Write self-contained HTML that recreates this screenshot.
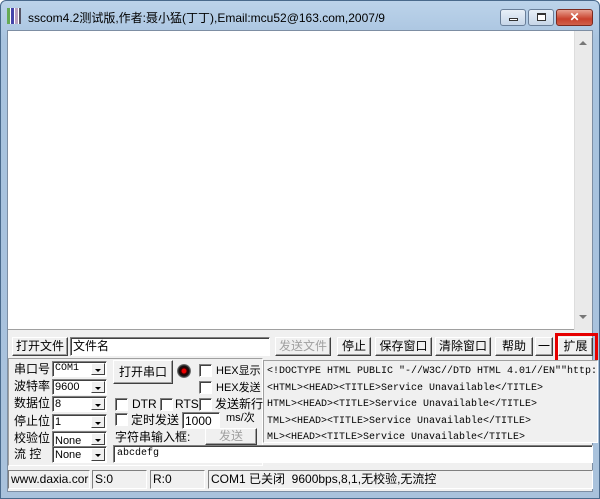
<!DOCTYPE html>
<html><head><meta charset="utf-8"><style>
*{box-sizing:border-box;margin:0;padding:0}
body{width:600px;height:499px;overflow:hidden;background:#fff;font-family:"Liberation Sans","Noto Sans CJK SC",sans-serif;font-size:12px;color:#000}
.win{position:absolute;left:0;top:0;width:600px;height:499px;background:linear-gradient(#bcd3ea,#a8c3df 40px,#a9c2dc);border:1px solid #4a6a8c;border-radius:6px 6px 0 0}
.a{position:absolute;white-space:nowrap}
.client{position:absolute;left:7px;top:30px;width:586px;height:462px;background:#f0f0f0;border:1px solid #7d8ea3}
.btn{position:absolute;background:#f0f0f0;border:1px solid;border-color:#fff #404040 #404040 #fff;box-shadow:inset -1px -1px #a0a0a0;text-align:center;font-size:12px;line-height:17px;white-space:nowrap}
.sunk{position:absolute;background:#fff;border:1px solid;border-color:#808080 #fff #fff #808080;box-shadow:inset 1px 1px #404040;white-space:nowrap}
.combo{position:absolute;background:#fff;border:1px solid;border-color:#808080 #fff #fff #808080;box-shadow:inset 1px 1px #404040;font-size:11px;padding-left:2px;line-height:14px}
.combo i{position:absolute;right:1px;top:1px;width:14px;bottom:1px;background:#f0f0f0;border:1px solid;border-color:#fff #404040 #404040 #fff}
.combo i:after{content:"";position:absolute;left:3px;top:5px;border-left:3px solid transparent;border-right:3px solid transparent;border-top:3px solid #000}
.chk{position:absolute;width:13px;height:13px;background:#fff;border:1px solid;border-color:#808080 #fff #fff #808080;box-shadow:inset 1px 1px #404040}
.lab{position:absolute;font-size:12px;line-height:16px;white-space:nowrap}
.mono{font-family:"Liberation Mono","Noto Sans CJK SC",monospace;font-size:10px}
.st{position:absolute;top:470px;height:19px;border:1px solid;border-color:#808080 #fff #fff #808080;font-size:12px;line-height:17px;padding-left:2px;white-space:nowrap;overflow:hidden}
</style></head><body>
<div class="win">
 <div class="a" style="left:6px;top:7px;width:14px;height:16px;background:linear-gradient(90deg,#6a5 0 3px,#fff 3px 4px,#44a 4px 7px,#fff 7px 8px,#b8a0c0 8px 11px,#fff 11px 12px,#556 12px)"></div>
 <div class="a" style="left:27px;top:8px;font-size:12px;color:#000">sscom4.2测试版,作者:聂小猛(丁丁),Email:mcu52@163.com,2007/9</div>
 <div class="a" style="left:499px;top:8px;width:26px;height:17px;border:1px solid #6a7f99;border-radius:3px;background:linear-gradient(#e8f0f8,#c6d6e8)"><div style="position:absolute;left:8px;top:8px;width:9px;height:3px;border:1px solid #333;background:#fff"></div></div>
 <div class="a" style="left:527px;top:8px;width:26px;height:17px;border:1px solid #6a7f99;border-radius:3px;background:linear-gradient(#e8f0f8,#c6d6e8)"><div style="position:absolute;left:8px;top:3px;width:9px;height:8px;border:1px solid #333;border-top-width:2px;background:#fff"></div></div>
 <div class="a" style="left:555px;top:8px;width:37px;height:17px;border:1px solid #7a2a20;border-radius:3px;background:linear-gradient(#e8a090,#c8412c 60%,#d0604a);color:#fff;font-weight:bold;text-align:center;line-height:15px;font-size:12px">✕</div>
</div>
<div class="client">
 <div class="a" style="left:0;top:0;width:584px;height:299px;background:#fff;border-bottom:1px solid #a0a0a0"></div>
 <div class="a" style="left:566px;top:0;width:18px;height:299px;background:#eaeaea;border-left:1px solid #ddd"></div>
 <div class="a" style="left:571px;top:10px;border-left:4px solid transparent;border-right:4px solid transparent;border-bottom:4px solid #777"></div>
 <div class="a" style="left:571px;top:284px;border-left:4px solid transparent;border-right:4px solid transparent;border-top:4px solid #777"></div>
</div>
<div class="btn" style="left:12px;top:337px;width:56px;height:19px">打开文件</div>
<div class="sunk" style="left:70px;top:337px;width:200px;height:19px;font-size:12px;line-height:17px;padding-left:2px">文件名</div>
<div class="btn" style="left:275px;top:337px;width:56px;height:19px;color:#a0a0a0">发送文件</div>
<div class="btn" style="left:337px;top:337px;width:34px;height:19px">停止</div>
<div class="btn" style="left:375px;top:337px;width:57px;height:19px">保存窗口</div>
<div class="btn" style="left:435px;top:337px;width:56px;height:19px">清除窗口</div>
<div class="btn" style="left:495px;top:337px;width:38px;height:19px">帮助</div>
<div class="btn" style="left:535px;top:337px;width:18px;height:19px">一</div>
<div class="btn" style="left:558px;top:337px;width:35px;height:19px">扩展</div>
<div class="a" style="left:555px;top:333px;width:43px;height:30px;border:3px solid #e60000"></div>
<div class="a" style="left:8px;top:358px;width:255px;height:108px;border:1px solid;border-color:#a0a0a0 #fff #fff #a0a0a0"></div>
<div class="lab" style="left:14px;top:361px">串口号</div>
<div class="lab" style="left:14px;top:378px">波特率</div>
<div class="lab" style="left:14px;top:395px">数据位</div>
<div class="lab" style="left:14px;top:413px">停止位</div>
<div class="lab" style="left:14px;top:430px">校验位</div>
<div class="lab" style="left:14px;top:446px">流&nbsp;控</div>
<div class="combo mono" style="left:52px;top:361px;width:55px;height:16px">COM1<i></i></div>
<div class="combo" style="left:52px;top:379px;width:55px;height:16px">9600<i></i></div>
<div class="combo" style="left:52px;top:396px;width:55px;height:16px">8<i></i></div>
<div class="combo" style="left:52px;top:414px;width:55px;height:16px">1<i></i></div>
<div class="combo" style="left:52px;top:431px;width:55px;height:16px;overflow:hidden;line-height:18px">None<i></i></div>
<div class="combo" style="left:52px;top:446px;width:55px;height:17px;line-height:16px">None<i></i></div>
<div class="btn" style="left:113px;top:360px;width:60px;height:24px;line-height:22px">打开串口</div>
<div class="a" style="left:177px;top:364px;width:14px;height:14px;border-radius:50%;background:radial-gradient(circle,#e00 0 2px,#300 3px,#111 5px,#888 7px)"></div>
<div class="chk" style="left:199px;top:364px"></div><div class="lab" style="left:216px;top:363px;font-size:11px">HEX显示</div>
<div class="chk" style="left:199px;top:381px"></div><div class="lab" style="left:216px;top:380px;font-size:11px">HEX发送</div>
<div class="chk" style="left:199px;top:398px"></div><div class="lab" style="left:215px;top:396px">发送新行</div>
<div class="chk" style="left:115px;top:398px"></div><div class="lab" style="left:132px;top:396px">DTR</div>
<div class="chk" style="left:160px;top:398px"></div><div class="lab" style="left:175px;top:396px">RTS</div>
<div class="chk" style="left:115px;top:413px"></div><div class="lab" style="left:131px;top:412px">定时发送</div>
<div class="sunk" style="left:182px;top:412px;width:38px;height:17px;font-size:12px;line-height:16px;padding-left:2px">1000</div>
<div class="lab" style="left:226px;top:410px;font-size:11px">ms/次</div>
<div class="lab" style="left:115px;top:429px">字符串输入框:</div>
<div class="btn" style="left:205px;top:428px;width:52px;height:17px;line-height:15px;color:#a0a0a0">发送</div>
<div class="sunk" style="left:263px;top:360px;width:335px;height:83px;background:#f0f0f0;box-shadow:none;border-color:#a0a0a0 #fff #fff #a0a0a0;overflow:hidden"></div>
<div class="a mono" style="left:267px;top:364px;width:330px;overflow:hidden;line-height:16.5px;font-size:10px">&lt;!DOCTYPE HTML PUBLIC "-//W3C//DTD HTML 4.01//EN""http:/<br>&lt;HTML&gt;&lt;HEAD&gt;&lt;TITLE&gt;Service Unavailable&lt;/TITLE&gt;<br>HTML&gt;&lt;HEAD&gt;&lt;TITLE&gt;Service Unavailable&lt;/TITLE&gt;<br>TML&gt;&lt;HEAD&gt;&lt;TITLE&gt;Service Unavailable&lt;/TITLE&gt;<br>ML&gt;&lt;HEAD&gt;&lt;TITLE&gt;Service Unavailable&lt;/TITLE&gt;</div>
<div class="sunk mono" style="left:113px;top:445px;width:480px;height:18px;font-size:10px;line-height:16px;padding-left:3px">abcdefg</div>
<div class="st" style="left:8px;width:82px">www.daxia.cor</div>
<div class="st" style="left:92px;width:55px">S:0</div>
<div class="st" style="left:150px;width:55px">R:0</div>
<div class="st" style="left:208px;width:385px;padding-left:2px">COM1 已关闭&nbsp;&nbsp;9600bps,8,1,无校验,无流控</div>
</body></html>
